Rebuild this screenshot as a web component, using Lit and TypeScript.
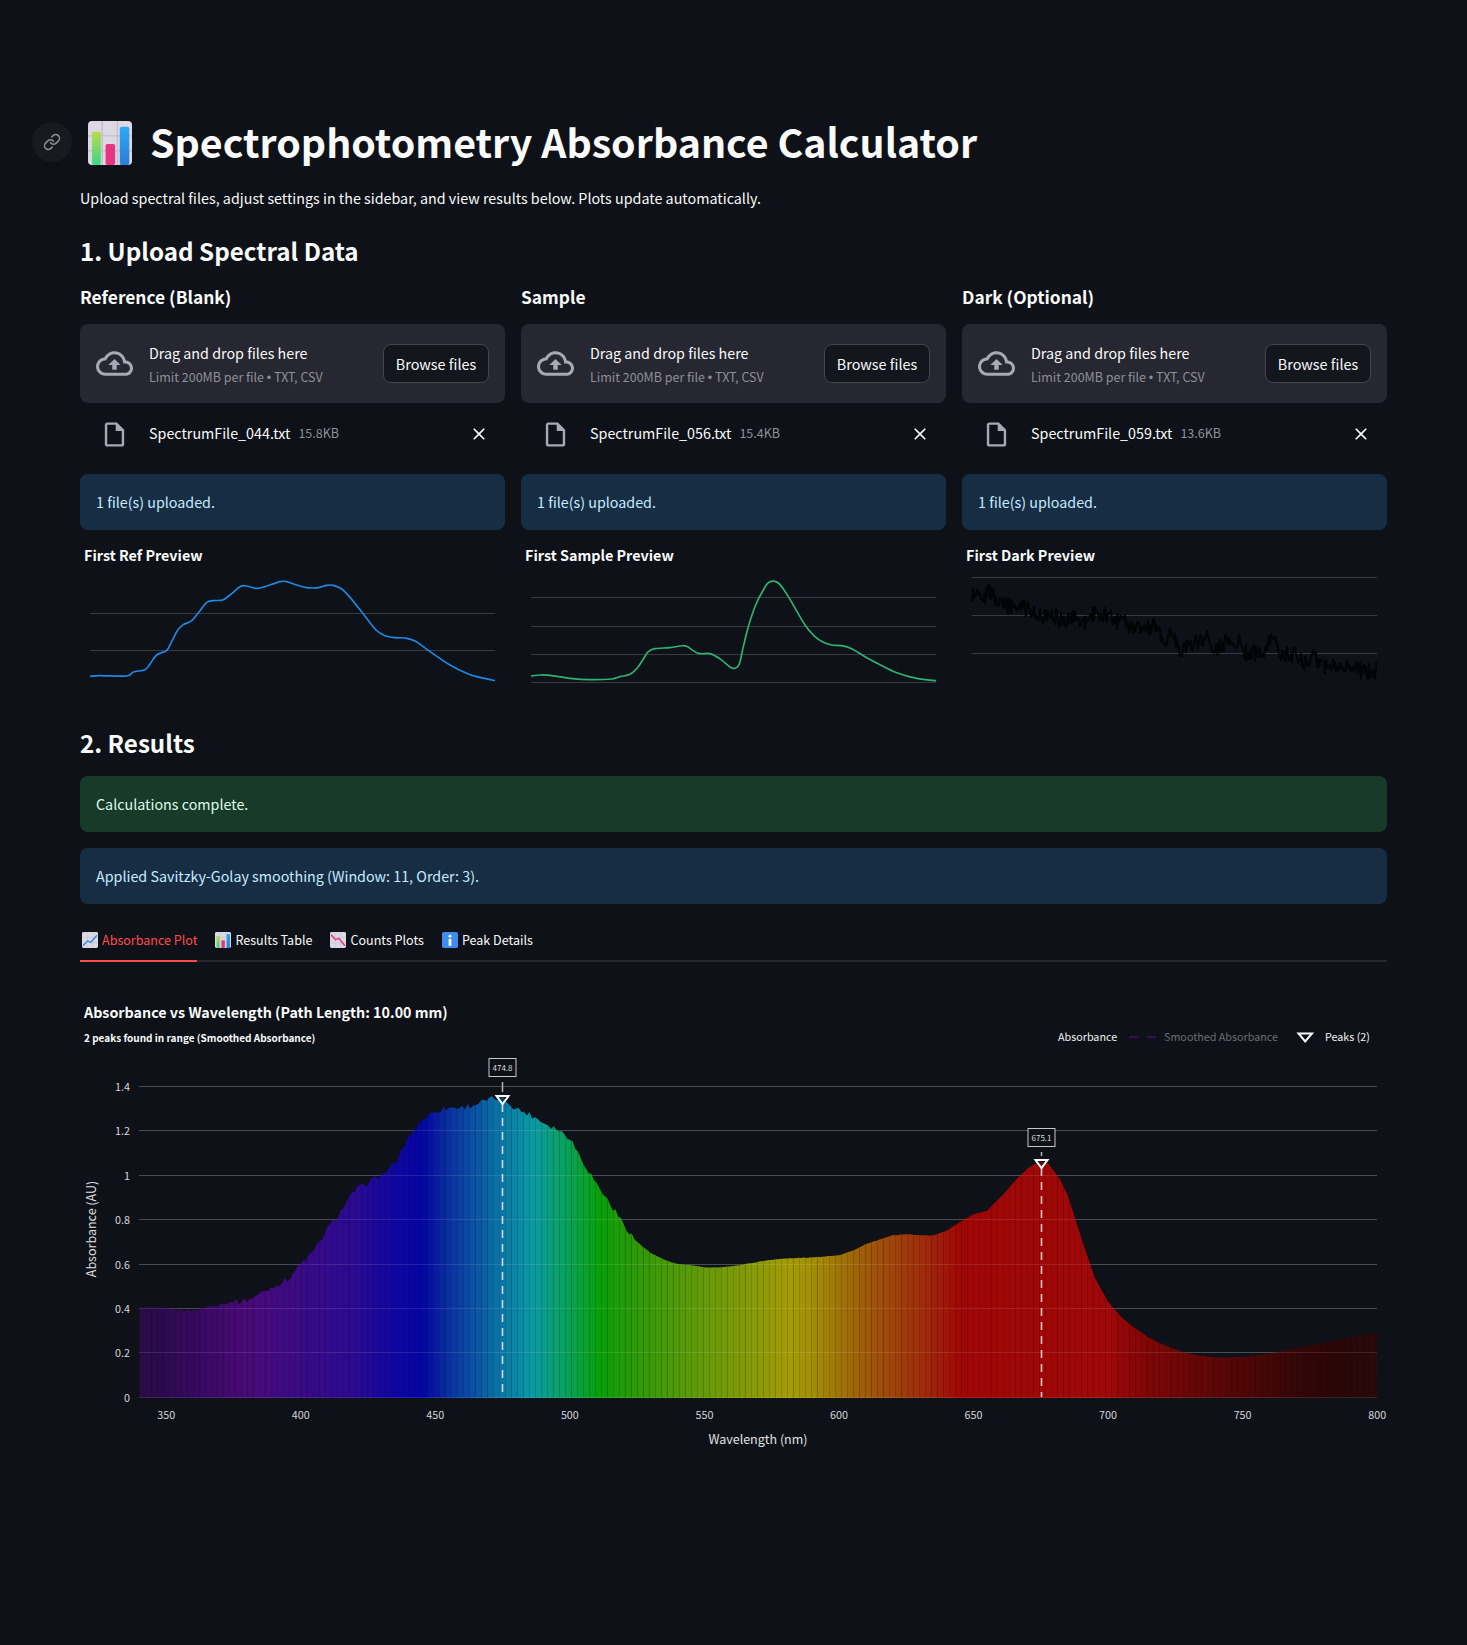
import { LitElement, html, svg, css } from "lit";
import { customElement } from "lit/decorators.js";

type Pt = [number, number];

const FILES = [
  { title: "Reference (Blank)", file: "SpectrumFile_044.txt", size: "15.8KB", preview: "First Ref Preview" },
  { title: "Sample", file: "SpectrumFile_056.txt", size: "15.4KB", preview: "First Sample Preview" },
  { title: "Dark (Optional)", file: "SpectrumFile_059.txt", size: "13.6KB", preview: "First Dark Preview" },
];

// preview curves, traced in 3x coordinates relative to a 0..1275 wide plot
const REF_LINE: Pt[] = [[60,409],[90,407],[170,408],[190,396],[225,389],[240,372],[260,345],[290,331],[305,305],[322,272],[340,254],[365,242],[390,212],[410,187],[430,182],[458,180],[480,165],[512,139],[530,138],[558,145],[585,140],[630,125],[650,125],[680,135],[710,143],[745,143],[770,136],[790,136],[815,147],[840,172],[880,222],[918,270],[945,287],[975,293],[1005,294],[1035,303],[1075,331],[1140,375],[1195,402],[1230,412],[1275,422]];
const SAMPLE_LINE: Pt[] = [[63,408],[90,405],[120,406],[180,415],[240,419],[305,417],[330,410],[360,403],[382,384],[400,357],[415,335],[435,326],[480,323],[510,318],[530,319],[565,340],[600,341],[632,358],[660,381],[675,385],[688,372],[700,320],[715,260],[737,195],[760,150],[778,126],[805,129],[835,170],[885,255],[915,290],[940,307],[965,315],[995,317],[1025,326],[1065,350],[1110,374],[1160,398],[1220,415],[1278,422]];
const DARK_TREND: Pt[] = [[66,170],[88,135],[100,180],[110,155],[122,155],[145,195],[230,205],[290,235],[300,210],[330,245],[370,230],[400,255],[430,225],[465,220],[500,250],[515,235],[540,270],[625,260],[640,305],[665,275],[695,335],[720,315],[775,295],[790,335],[830,305],[850,330],[870,300],[885,335],[945,340],[968,275],[990,360],[1015,335],[1060,365],[1095,355],[1125,378],[1175,365],[1200,385],[1270,400],[1281,385]];

// absorbance by wavelength, read off the plot
const ABS: Pt[] = [[340,.405],[350,.4],[360,.392],[370,.42],[380,.437],[390,.5],[395,.53],[400,.6],[405,.66],[410,.76],[415,.84],[420,.93],[425,.97],[430,1],[435,1.05],[440,1.17],[445,1.25],[450,1.29],[455,1.305],[460,1.305],[465,1.32],[470,1.34],[475,1.35],[480,1.3],[485,1.275],[490,1.24],[495,1.21],[500,1.17],[505,1.06],[510,.96],[515,.87],[520,.78],[525,.7],[530,.65],[535,.62],[540,.6],[545,.595],[550,.585],[555,.585],[560,.59],[565,.6],[570,.61],[575,.62],[580,.625],[590,.63],[600,.64],[605,.66],[610,.69],[615,.71],[620,.73],[625,.735],[630,.73],[635,.73],[640,.75],[645,.79],[650,.825],[655,.84],[660,.9],[665,.97],[670,1.03],[675,1.065],[678,1.05],[682,.985],[685,.91],[690,.72],[695,.54],[700,.43],[705,.36],[710,.31],[715,.27],[720,.24],[725,.215],[730,.197],[735,.187],[740,.18],[745,.18],[750,.182],[755,.19],[760,.197],[770,.22],[780,.245],[790,.27],[800,.29]];

const COLORS: [number, string][] = [[340,"#2a0c45"],[350,"#2e0a50"],[360,"#36085f"],[380,"#4a0a78"],[390,"#420a80"],[400,"#3a0a85"],[420,"#2a0a92"],[435,"#0f06a0"],[445,"#0505a4"],[455,"#0a30a0"],[465,"#0a55a5"],[474,"#0a75a5"],[486,"#0a98a5"],[495,"#0aa070"],[503,"#08a040"],[511,"#08a008"],[523,"#2a9a08"],[536,"#489a08"],[555,"#6f9a08"],[573,"#909a05"],[582,"#a59c05"],[592,"#a08a05"],[604,"#a06a08"],[616,"#a04c0a"],[629,"#9e300a"],[639,"#a01808"],[645,"#a00606"],[700,"#a00808"],[710,"#880606"],[725,"#700606"],[745,"#560606"],[770,"#360606"],[785,"#2a0606"],[800,"#2c0a0c"]];

const noise = (i: number) => {
  const s = Math.sin(i * 127.1 + 311.7) * 43758.5453;
  return s - Math.floor(s) - 0.5;
};

const lerp = (pts: Pt[], x: number) => {
  for (let i = 1; i < pts.length; i++) {
    if (x <= pts[i][0]) {
      const [x0, y0] = pts[i - 1];
      const [x1, y1] = pts[i];
      return y0 + ((y1 - y0) * (x - x0)) / (x1 - x0);
    }
  }
  return pts[pts.length - 1][1];
};

const hex = (c: string) => [1, 3, 5].map((i) => parseInt(c.slice(i, i + 2), 16));

const colorAt = (nm: number) => {
  for (let i = 1; i < COLORS.length; i++) {
    if (nm <= COLORS[i][0]) {
      const t = (nm - COLORS[i - 1][0]) / (COLORS[i][0] - COLORS[i - 1][0]);
      const a = hex(COLORS[i - 1][1]);
      const b = hex(COLORS[i][1]);
      return `rgb(${a.map((v, k) => Math.round(v + (b[k] - v) * t)).join(",")})`;
    }
  }
  return COLORS[COLORS.length - 1][1];
};

// catmull-rom through the traced points
const smooth = (p: Pt[]) => {
  let d = `M${p[0][0]} ${p[0][1]}`;
  for (let i = 0; i < p.length - 1; i++) {
    const a = p[Math.max(i - 1, 0)];
    const b = p[i];
    const c = p[i + 1];
    const e = p[Math.min(i + 2, p.length - 1)];
    d += `C${b[0] + (c[0] - a[0]) / 6} ${b[1] + (c[1] - a[1]) / 6} ${c[0] - (e[0] - b[0]) / 6} ${c[1] - (e[1] - b[1]) / 6} ${c[0]} ${c[1]}`;
  }
  return d;
};

const darkPath = () => {
  let d = "";
  for (let x = 66, i = 0; x <= 1281; x += 3, i++) {
    const y = lerp(DARK_TREND, x) + 50 * noise(i);
    d += `${i ? "L" : "M"}${x} ${y.toFixed(1)}`;
  }
  return d;
};

const X = (nm: number) => 139.3 + (nm - 340) * 2.691;
const Y = (a: number) => 1397.3 - a * 222;

const areaPoints = () => {
  const pts: string[] = [`${X(340)},${Y(0) + 1}`];
  for (let nm = 340, i = 0; nm <= 800; nm += 1, i++) {
    const amp = nm > 375 && nm < 525 ? 0.028 : nm < 375 ? 0.012 : 0.002;
    const a = lerp(ABS, nm) + amp * noise(i);
    pts.push(`${X(nm).toFixed(1)},${Y(a).toFixed(1)}`);
  }
  pts.push(`${X(800)},${Y(0) + 1}`);
  return pts.join(" ");
};

const GRID = [0, 0.2, 0.4, 0.6, 0.8, 1, 1.2, 1.4];
const TICKS = [350, 400, 450, 500, 550, 600, 650, 700, 750, 800];
const PEAKS = [
  { nm: 474.8, top: 1058, tri: 1095 },
  { nm: 675.1, top: 1128, tri: 1159 },
];

const emojiBase = svg`<rect width="130" height="130" rx="12" fill="#dcd8e4"></rect>
  <path d="M42 0V130M87 0V130M0 44H130M0 88H130" stroke="#c3bfcc" stroke-width="4"></path>`;

const barChart = html`<svg viewBox="0 0 130 130">
  <defs><linearGradient id="g" x1="0" y1="0" x2="0" y2="1"><stop offset="0" stop-color="#b6dc4c"></stop><stop offset="1" stop-color="#3cd884"></stop></linearGradient>
  <linearGradient id="b" x1="0" y1="0" x2="0" y2="1"><stop offset="0" stop-color="#2ea8f4"></stop><stop offset="1" stop-color="#2a7ed8"></stop></linearGradient></defs>
  ${emojiBase}
  <rect x="12" y="32" width="26" height="98" rx="5" fill="url(#g)"></rect>
  <rect x="52" y="68" width="28" height="62" rx="5" fill="#e8357f"></rect>
  <rect x="94" y="17" width="28" height="113" rx="5" fill="url(#b)"></rect>
</svg>`;

const tabIcons = [
  html`<svg viewBox="0 0 130 130">${emojiBase}<path d="M8 112L45 72L72 84L122 26" fill="none" stroke="#3a8fe0" stroke-width="12"></path></svg>`,
  barChart,
  html`<svg viewBox="0 0 130 130">${emojiBase}<path d="M8 22L45 62L72 52L122 112" fill="none" stroke="#e8357f" stroke-width="12"></path></svg>`,
  html`<svg viewBox="0 0 130 130"><rect width="130" height="130" rx="14" fill="#3d8df0"></rect><circle cx="65" cy="34" r="12" fill="#fff"></circle><rect x="54" y="56" width="22" height="56" fill="#fff"></rect></svg>`,
];

const TABS = ["Absorbance Plot", "Results Table", "Counts Plots", "Peak Details"];

@customElement("app-root")
export class AppRoot extends LitElement {
  static styles = css`
    :host {
      display: block;
      min-height: 1645px;
      background: #0e1117;
      color: #fafafa;
      font-family: "Noto Sans CJK SC", "Noto Sans", sans-serif;
    }
    .main {
      padding: 118px 80px 0;
    }
    .title-row {
      position: relative;
      display: flex;
      align-items: center;
      gap: 18px;
      height: 50px;
      padding-left: 8px;
    }
    .emoji {
      width: 44px;
      height: 44px;
    }
    .emoji svg,
    .tab-icon svg {
      display: block;
      width: 100%;
      height: 100%;
    }
    .anchor {
      position: absolute;
      left: -48px;
      top: 4px;
      width: 40px;
      height: 40px;
      border-radius: 50%;
      background: #171a20;
      display: flex;
      align-items: center;
      justify-content: center;
    }
    h1 {
      margin: -4px 0 0;
      font-size: 39.35px;
      line-height: 50px;
      font-weight: 700;
    }
    .caption {
      margin: 18px 0 0;
      font-size: 14.32px;
      line-height: 24px;
    }
    h2 {
      margin: 23px 0 0;
      font-size: 24.2px;
      line-height: 36px;
      font-weight: 600;
    }
    .cols {
      display: grid;
      grid-template-columns: repeat(3, 425px);
      gap: 16px;
      margin-top: 14px;
    }
    h3 {
      margin: 0 0 13px;
      font-size: 17.35px;
      line-height: 28px;
      font-weight: 600;
    }
    .drop {
      display: flex;
      align-items: center;
      height: 79px;
      padding: 0 16px;
      box-sizing: border-box;
      background: #262730;
      border-radius: 8px;
    }
    .cloud {
      width: 37px;
      height: 37px;
      fill: #a7a9b5;
      margin-right: 16px;
    }
    .drop-text {
      flex: 1;
      padding-top: 3px;
    }
    .drop-main {
      font-size: 14.3px;
      line-height: 24px;
    }
    .drop-sub {
      font-size: 12.5px;
      line-height: 22px;
      color: #8e9096;
      margin-top: 1px;
    }
    .dot {
      font-family: "Liberation Sans", sans-serif;
    }
    .browse {
      width: 106px;
      height: 39px;
      box-sizing: border-box;
      background: #13161d;
      border: 1px solid #43454d;
      border-radius: 8px;
      color: #fafafa;
      font: inherit;
      font-size: 14.4px;
      padding: 0;
    }
    .file {
      display: flex;
      align-items: center;
      height: 62px;
      padding: 0 16px 0 20px;
    }
    .file-icon {
      width: 29px;
      height: 29px;
      fill: #a7a9b5;
      margin-right: 20px;
    }
    .file-name {
      font-size: 14.3px;
      margin-top: -4px;
    }
    .file-size {
      margin: -3px 0 0 8px;
      font-size: 12.5px;
      color: #8e9096;
      flex: 1;
    }
    .close {
      width: 20px;
      height: 20px;
      fill: #fafafa;
    }
    .note {
      height: 56px;
      box-sizing: border-box;
      padding: 0 16px 2px;
      display: flex;
      align-items: center;
      border-radius: 8px;
      font-size: 14.3px;
    }
    .info {
      background: #172d43;
      color: #c7ebff;
    }
    .ok {
      background: #173a29;
      color: #dffde9;
    }
    .file + .note {
      margin-top: 9px;
    }
    .preview-title {
      margin: 15px 0 5px;
      padding-left: 4px;
      font-size: 14.35px;
      line-height: 20px;
      font-weight: 700;
    }
    .preview {
      display: block;
      width: 425px;
      height: 120px;
    }
    .results {
      margin-top: 35px;
    }
    .results h2 {
      margin: 0 0 15px;
    }
    .results .note + .note {
      margin-top: 16px;
    }
    .tabs {
      display: flex;
      gap: 16px;
      margin-top: 16px;
      height: 40px;
      border-bottom: 2px solid #26272e;
    }
    .tab {
      display: flex;
      align-items: center;
      gap: 4px;
      height: 40px;
      padding-left: 2px;
      padding-bottom: 1px;
      box-sizing: border-box;
      font-size: 12.55px;
      line-height: 19px;
      color: #fafafa;
    }
    .tab.on {
      color: #ff4b4b;
      height: 42px;
      padding-bottom: 1px;
      border-bottom: 2px solid #ff4b4b;
    }
    .tab-icon {
      width: 16px;
      height: 16px;
    }
    .chart {
      display: block;
      margin-top: 38px;
      width: 1307px;
      height: 460px;
      font-family: "Noto Sans CJK SC", "Noto Sans", sans-serif;
    }
    .chart text {
      dominant-baseline: central;
    }
    .c-title {
      font-size: 14.3px;
      font-weight: 700;
      fill: #fafafa;
    }
    .c-sub {
      font-size: 10px;
      font-weight: 700;
      fill: #fafafa;
    }
    .legend {
      font-size: 10.75px;
      fill: #f0f0f0;
    }
    .legend.off {
      fill: #6c6e74;
    }
    .tick {
      font-size: 10.75px;
      fill: #d6d6d9;
    }
    .axis {
      font-size: 12.5px;
      fill: #e2e2e4;
    }
    .peak-label {
      font-size: 8px;
      fill: #dcdcdc;
    }
  `;

  private preview(i: number) {
    const x0 = [30, 33, 36][i];
    const grids = [[220.5, 331.5], [172.5, 259.5, 343.5, 427.5], [112.5, 226.5, 340.5]][i];
    const gx0 = x0 + 30;
    const gx1 = x0 + 1245;
    const line = i === 0 ? smooth(REF_LINE) : i === 1 ? smooth(SAMPLE_LINE) : darkPath();
    const stroke = ["#1f88e5", "#2fb36e", "#030406"][i];
    return html`<svg class="preview" viewBox="${x0} 90 1275 360">
      ${grids.map((y) => svg`<line x1=${gx0} x2=${gx1} y1=${y} y2=${y} stroke="#393b43" stroke-width="3"></line>`)}
      <path d=${line} fill="none" stroke=${stroke} stroke-width=${i === 2 ? 6 : 5} stroke-linejoin="round"></path>
    </svg>`;
  }

  private column(f: (typeof FILES)[number], i: number) {
    return html`<div>
      <h3>${f.title}</h3>
      <div class="drop">
        <svg class="cloud" viewBox="0 0 24 24"><path d="M19.35 10.04C18.67 6.59 15.64 4 12 4 9.11 4 6.6 5.64 5.35 8.04 2.34 8.36 0 10.91 0 14c0 3.31 2.69 6 6 6h13c2.76 0 5-2.24 5-5 0-2.64-2.05-4.78-4.65-4.96zM19 18H6c-2.21 0-4-1.79-4-4 0-2.05 1.53-3.76 3.56-3.97l1.07-.11.5-.95C8.08 7.14 9.94 6 12 6c2.62 0 4.88 1.86 5.39 4.43l.3 1.5 1.53.11c1.56.1 2.78 1.41 2.78 2.96 0 1.65-1.35 3-3 3zM8 13h2.55v3h2.9v-3H16l-4-4z"></path></svg>
        <div class="drop-text">
          <div class="drop-main">Drag and drop files here</div>
          <div class="drop-sub">Limit 200MB per file <span class="dot">•</span> TXT, CSV</div>
        </div>
        <button class="browse">Browse files</button>
      </div>
      <div class="file">
        <svg class="file-icon" viewBox="0 0 24 24"><path d="M14 2H6c-1.1 0-1.99.9-1.99 2L4 20c0 1.1.89 2 1.99 2H18c1.1 0 2-.9 2-2V8l-6-6zM6 20V4h7v5h5v11H6z"></path></svg>
        <span class="file-name">${f.file}</span>
        <span class="file-size">${f.size}</span>
        <svg class="close" viewBox="0 0 24 24"><path d="M19 6.41L17.59 5 12 10.59 6.41 5 5 6.41 10.59 12 5 17.59 6.41 19 12 13.41 17.59 19 19 17.59 13.41 12z"></path></svg>
      </div>
      <div class="note info">1 file(s) uploaded.</div>
      <div class="preview-title">${f.preview}</div>
      ${this.preview(i)}
    </div>`;
  }

  private bars() {
    const out = [];
    for (let x = 139.3; x < 1377; x += 6) {
      const nm = 340 + (x + 3 - 139.3) / 2.691;
      // seams between bars are uneven in strength, many hardly show
      const seam = Math.max(0, noise(x) + 0.1) * 0.2;
      out.push(svg`<rect x=${x} y="1080" width="6.2" height="318" fill=${colorAt(nm)}></rect>
        <line x1=${x} x2=${x} y1="1080" y2="1398" stroke="#000" stroke-opacity=${seam} stroke-width="1"></line>`);
    }
    return out;
  }

  private chart() {
    return html`<svg class="chart" viewBox="80 1000 1307 460">
      <defs><clipPath id="area"><polygon points=${areaPoints()}></polygon></clipPath></defs>
      <text class="c-title" x="84" y="1011">Absorbance vs Wavelength (Path Length: 10.00 mm)</text>
      <text class="c-sub" x="84" y="1037">2 peaks found in range (Smoothed Absorbance)</text>

      <text class="legend" x="1058" y="1036">Absorbance</text>
      <path d="M1129 1037H1138M1147 1037H1156" stroke="#4a0a60" stroke-width="1.5"></path>
      <text class="legend off" x="1164" y="1036">Smoothed Absorbance</text>
      <path d="M1298.5 1033.5H1312L1305.2 1041.5Z" fill="none" stroke="#fafafa" stroke-width="2"></path>
      <text class="legend" x="1325" y="1036">Peaks (2)</text>

      ${GRID.map((a) => {
        const y = Math.floor(Y(a)) + 0.5;
        return svg`<line x1="139" x2="1377" y1=${y} y2=${y} stroke="#363840"></line>
          <text class="tick" x="130" y=${y} text-anchor="end">${a}</text>`;
      })}
      <g clip-path="url(#area)">${this.bars()}</g>
      ${GRID.map((a) => {
        const y = Math.floor(Y(a)) + 0.5;
        return svg`<line x1="139" x2="1377" y1=${y} y2=${y} stroke="#fff" stroke-opacity="0.1"></line>`;
      })}
      ${TICKS.map((t) => svg`<text class="tick" x=${X(t)} y="1414" text-anchor="middle">${t}</text>`)}
      <text class="axis" x="758" y="1438" text-anchor="middle">Wavelength (nm)</text>
      <text class="axis" transform="translate(90 1229) rotate(-90)" text-anchor="middle">Absorbance (AU)</text>

      ${PEAKS.map((p) => {
        const x = Math.round(X(p.nm)) + 0.5;
        const b = p.top;
        const t = p.tri;
        return svg`<path d="M${x} ${b + 24}V${t - 3}" stroke="#b5b5b8" stroke-width="1.5"></path>
          <line x1=${x} x2=${x} y1=${t + 9} y2="1397" stroke="#f5e6e6" stroke-opacity="0.85" stroke-width="1.6" stroke-dasharray="8 6"></line>
          <path d="M${x - 6} ${t + 1}H${x + 6}L${x} ${t + 9}Z" fill="#0e1117" fill-opacity="0.5" stroke="#fafafa" stroke-width="2"></path>
          <rect x=${x - 13.5} y=${b + 0.5} width="27" height="18" fill="#0e1117" stroke="#c8c8c8" stroke-width="1"></rect>
          <text class="peak-label" x=${x} y=${b + 9.5} text-anchor="middle">${p.nm}</text>`;
      })}
    </svg>`;
  }

  render() {
    return html`<div class="main">
      <div class="title-row">
        <a class="anchor"><svg width="18" height="18" viewBox="0 0 24 24" fill="none" stroke="#8d8f94" stroke-width="2" stroke-linecap="round" stroke-linejoin="round"><path d="M10 13a5 5 0 0 0 7.54.54l3-3a5 5 0 0 0-7.07-7.07l-1.72 1.71"></path><path d="M14 11a5 5 0 0 0-7.54-.54l-3 3a5 5 0 0 0 7.07 7.07l1.71-1.71"></path></svg></a>
        <div class="emoji">${barChart}</div>
        <h1>Spectrophotometry Absorbance Calculator</h1>
      </div>
      <p class="caption">Upload spectral files, adjust settings in the sidebar, and view results below. Plots update automatically.</p>
      <h2>1. Upload Spectral Data</h2>
      <div class="cols">${FILES.map((f, i) => this.column(f, i))}</div>
      <div class="results">
        <h2>2. Results</h2>
        <div class="note ok">Calculations complete.</div>
        <div class="note info">Applied Savitzky-Golay smoothing (Window: 11, Order: 3).</div>
        <div class="tabs">
          ${TABS.map((t, i) => html`<div class="tab ${i === 0 ? "on" : ""}"><span class="tab-icon">${tabIcons[i]}</span>${t}</div>`)}
        </div>
        ${this.chart()}
      </div>
    </div>`;
  }
}
